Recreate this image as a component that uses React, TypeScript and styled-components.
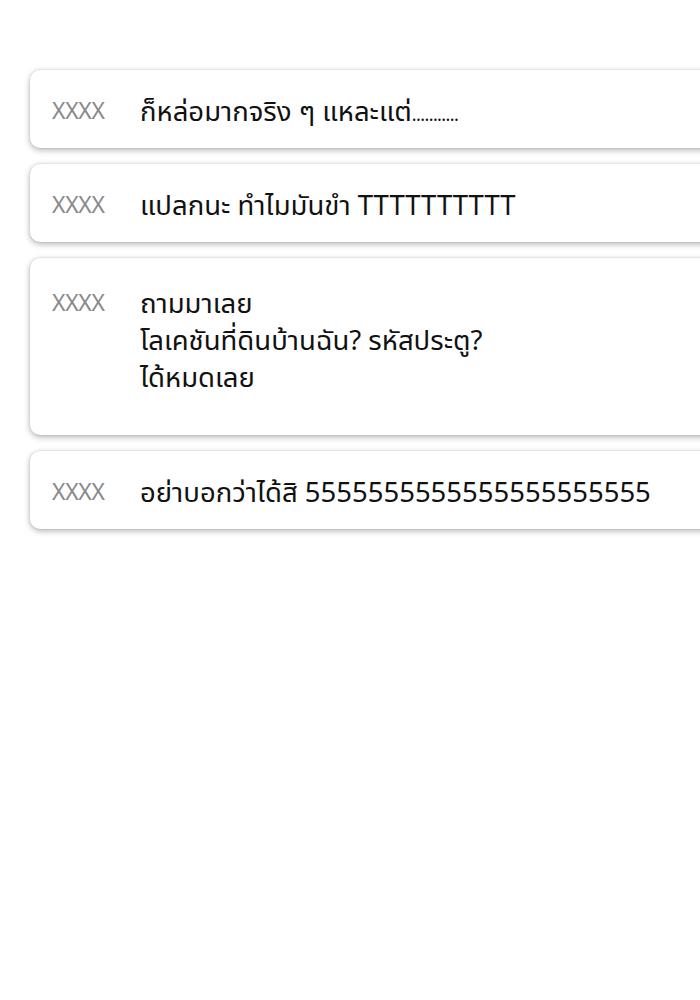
import React from 'react';
import styled, { createGlobalStyle } from 'styled-components';

const GlobalStyle = createGlobalStyle`
  html, body {
    margin: 0;
    padding: 0;
    background: #ffffff;
    overflow: hidden;
  }
  body {
    font-family: "Noto Sans Thai", "Noto Sans", "DejaVu Sans", sans-serif;
  }
`;

const Page = styled.div`
  width: 700px;
  height: 1000px;
  padding: 70px 0 0 30px;
  box-sizing: border-box;
  overflow: hidden;
`;

const List = styled.div`
  display: flex;
  flex-direction: column;
  gap: 16px;
  width: 700px;
`;

const Card = styled.div<{ $tall?: boolean }>`
  display: flex;
  align-items: flex-start;
  background: #ffffff;
  border-radius: 10px;
  box-shadow: 0 2px 6px rgba(0, 0, 0, 0.3), 0 0 2px rgba(0, 0, 0, 0.14);
  padding: ${(p) => (p.$tall ? '28px 0 38px 22px' : '24px 0 17px 22px')};
`;

const Name = styled.span`
  width: 88px;
  flex-shrink: 0;
  color: #8a8a8a;
  font-size: 23px;
  line-height: 37px;
  letter-spacing: -0.3px;
`;

const Message = styled.div`
  color: #111111;
  font-size: 27.5px;
  line-height: 37px;
  white-space: pre-line;
`;

// trailing "..........." is set tight in the original
const Dots = styled.span`
  font-size: 18px;
  line-height: 1;
  letter-spacing: -0.6px;
`;

const comments = [
  { name: 'XXXX', text: 'ก็หล่อมากจริง ๆ แหละแต่', dots: '...........' },
  { name: 'XXXX', text: 'แปลกนะ ทำไมมันขำ TTTTTTTTTT' },
  { name: 'XXXX', text: 'ถามมาเลย\nโลเคชันที่ดินบ้านฉัน? รหัสประตู?\nได้หมดเลย', tall: true },
  { name: 'XXXX', text: 'อย่าบอกว่าได้สิ 5555555555555555555555' },
];

export default function App() {
  return (
    <>
      <GlobalStyle />
      <Page>
        <List>
          {comments.map((c, i) => (
            <Card key={i} $tall={c.tall}>
              <Name>{c.name}</Name>
              <Message>
                {c.text}
                {c.dots && <Dots>{c.dots}</Dots>}
              </Message>
            </Card>
          ))}
        </List>
      </Page>
    </>
  );
}
